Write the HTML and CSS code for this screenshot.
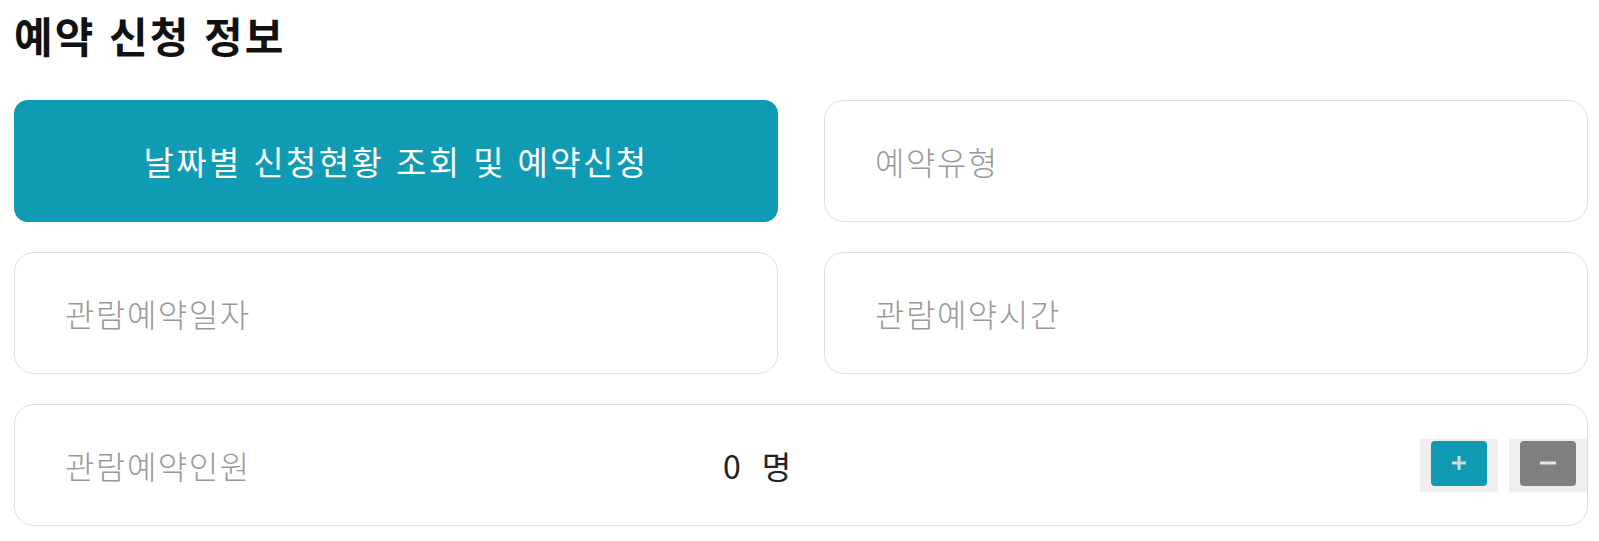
FILE: index.html
```html
<!DOCTYPE html>
<html lang="ko">
<head>
<meta charset="utf-8">
<title>예약 신청 정보</title>
<link rel="stylesheet" href="styles.css">
</head>
<body>
<div class="wrap">
  <h2 class="title">예약 신청 정보</h2>
  <div class="grid">
    <button class="cta">날짜별 신청현황 조회 및 예약신청</button>
    <div class="field"><span class="ph">예약유형</span></div>
    <div class="field"><span class="ph">관람예약일자</span></div>
    <div class="field"><span class="ph">관람예약시간</span></div>
    <div class="field full">
      <span class="ph ph-fixed">관람예약인원</span>
      <span class="count"><span class="num">0</span><span class="unit">명</span></span>
      <div class="steppers">
        <span class="step-wrap"><span class="step plus"><svg width="16" height="16" viewBox="0 0 16 16"><path d="M8 1v14M1 8h14" stroke="#d8d8d8" stroke-width="3"/></svg></span></span>
        <span class="step-wrap"><span class="step minus"><svg width="18" height="16" viewBox="0 0 18 16"><path d="M1 8h16" stroke="#e6e6e6" stroke-width="3"/></svg></span></span>
      </div>
    </div>
  </div>
</div>
</body>
</html>
```
FILE: styles.css
```css
* { box-sizing: border-box; }
html, body { margin: 0; padding: 0; background: #fff; }
body { font-family: "Noto Sans CJK KR", "Noto Sans", sans-serif; color: #222; }
.wrap { width: 1574px; margin-left: 14px; padding-top: 6px; }
.title { margin: 0 0 36px 0; font-size: 42px; font-weight: 700; line-height: 58px; color: #111; letter-spacing: 2px; }
.grid { display: grid; grid-template-columns: 764px 764px; column-gap: 46px; row-gap: 30px; }
.cta { height: 122px; border: 0; border-radius: 14px; background: #0f9bb4; color: #fff; font-family: inherit; font-size: 33px; font-weight: 400; letter-spacing: 2.4px; cursor: pointer; padding: 0; }
.field { height: 122px; border: 1px solid #dedede; border-radius: 20px; display: flex; align-items: center; padding-left: 50px; background: #fff; }
.field.full { grid-column: 1 / span 2; padding-right: 0; }
.ph { font-size: 32px; font-weight: 300; color: #999; letter-spacing: 1.5px; }
.ph-fixed { flex: 0 0 658px; }
.count { display: flex; gap: 21px; font-size: 32px; color: #222; }
.steppers { margin-left: auto; display: flex; gap: 11px; }
.step-wrap { display: block; background: #efefef; padding: 2px 11px 6px 11px; }
.step { width: 56px; height: 45px; border-radius: 4px; display: flex; align-items: center; justify-content: center; }
.plus { background: #0f9bb4; }
.minus { background: #808080; }
```
